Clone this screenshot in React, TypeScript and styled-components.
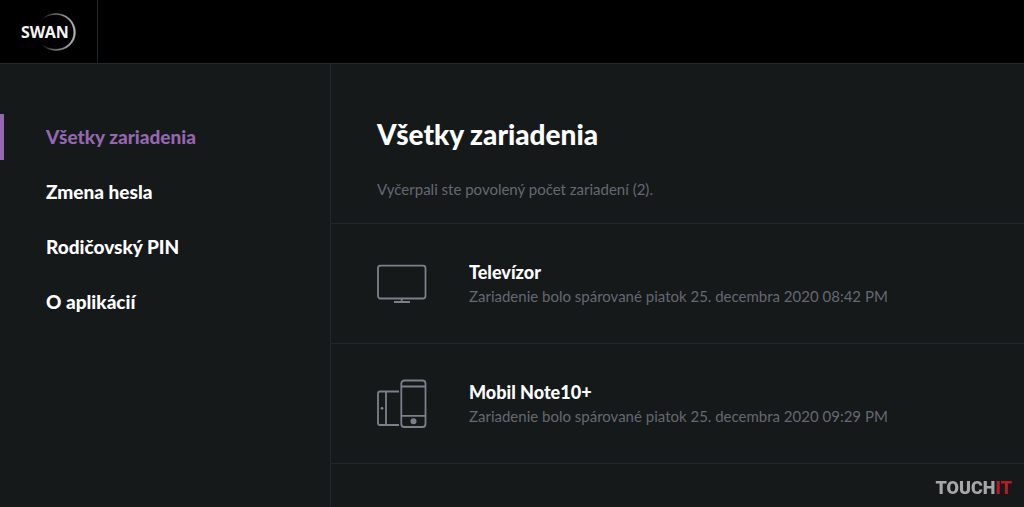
import React from "react";
import styled, { createGlobalStyle } from "styled-components";

const line = "#22262d";
const muted = "#656872";

const GlobalStyle = createGlobalStyle`
  * { box-sizing: border-box; }
  body {
    margin: 0;
    background: #15191a;
    color: #ffffff;
    font-family: Lato, "Liberation Sans", sans-serif;
  }
  h1, h2, p, ul { margin: 0; padding: 0; }
`;

const Page = styled.div`
  min-height: 100vh;
  display: flex;
  flex-direction: column;
`;

const Header = styled.header`
  display: flex;
  height: 64px;
  background: #000000;
  border-bottom: 1px solid ${line};
`;

const LogoLink = styled.a`
  display: flex;
  width: 98px;
  padding: 10px 0 0 20px;
  border-right: 1px solid ${line};
`;

const Body = styled.div`
  flex: 1;
  display: flex;
`;

const Sidebar = styled.nav`
  flex: 0 0 331px;
  padding-top: 50px;
  border-right: 1px solid ${line};
`;

const Menu = styled.ul`
  display: flex;
  flex-direction: column;
  gap: 9px;
  list-style: none;
`;

const MenuLink = styled.a<{ $active?: boolean }>`
  display: block;
  padding-left: 42px;
  border-left: 4px solid ${(p) => (p.$active ? "#9468ae" : "transparent")};
  color: ${(p) => (p.$active ? "#9468ae" : "#ffffff")};
  font-size: 19px;
  font-weight: 900;
  line-height: 46px;
  text-decoration: none;
`;

const Main = styled.main`
  flex: 1;
  min-width: 0;
`;

const Intro = styled.div`
  padding: 52px 46px 22px;
  border-bottom: 1px solid ${line};
`;

const Title = styled.h1`
  font-size: 28px;
  font-weight: 900;
  line-height: 36px;
`;

const Muted = styled.p`
  color: ${muted};
  font-size: 15px;
  line-height: 24px;
`;

const Notice = styled(Muted)`
  margin-top: 25px;
`;

const DeviceList = styled.ul`
  list-style: none;
`;

const Device = styled.li`
  display: flex;
  align-items: center;
  gap: 42px;
  height: 120px;
  padding: 0 46px;
  border-bottom: 1px solid ${line};
`;

const DeviceName = styled.h2`
  font-size: 18px;
  font-weight: 900;
  line-height: 24px;
`;

const Watermark = styled.div`
  position: fixed;
  right: 12px;
  bottom: 7px;
  color: #a6a7a8;
  font-family: Roboto, "Liberation Sans", sans-serif;
  font-size: 18px;
  font-weight: 900;
  line-height: 24px;
`;

const WatermarkAccent = styled.span`
  color: #b01d24;
`;

const SwanLogo = () => (
  <svg width="58" height="44" viewBox="0 0 58 44" role="img" aria-label="SWAN">
    <defs>
      <linearGradient id="ring" x1="0" x2="1" y1="0" y2="0">
        <stop offset="0" stopColor="#fff" stopOpacity="0" />
        <stop offset="0.35" stopColor="#fff" stopOpacity="0.35" />
        <stop offset="1" stopColor="#fff" stopOpacity="0.7" />
      </linearGradient>
    </defs>
    <path
      d="M21 10.500C24.500 6 30 3.500 36.500 3.500C47 3.500 55.500 12 55.500 22.300C55.500 32.500 47 40.500 36.500 40.500C30 40.500 24.500 38 21 33.500C25 37 30 39.200 36 39.200C46 39.200 53.800 32 53.800 22.300C53.800 12.500 46 4.600 36 4.600C30 4.600 25 6.500 21 10.500Z"
      fill="url(#ring)"
      stroke="url(#ring)"
      strokeWidth="0.4"
    />
    <text x="1" y="28" fill="#f4f4f4" fontFamily="Noto Sans, sans-serif" fontSize="16" fontWeight="700">
      SWAN
    </text>
  </svg>
);

const TvIcon = () => (
  <svg width="50" height="50" viewBox="0 0 50 50" fill="none" stroke="#7d7f8a" strokeWidth="1.800" aria-hidden="true">
    <rect x="1" y="6.700" width="47.500" height="32.800" rx="2.500" />
    <path d="M24.700 39.500V43M17 43H33" />
  </svg>
);

const PhonesIcon = () => (
  <svg width="50" height="50" viewBox="0 0 50 50" fill="none" stroke="#7d7f8a" strokeWidth="1.800" aria-hidden="true">
    <path d="M22 12.500H3Q1 12.500 1 14.500V44Q1 46 3 46H22M9 12.500V46" />
    <rect x="24.300" y="1.500" width="24.200" height="46.500" rx="3" />
    <path d="M24.300 7.500H48.500M24.300 36.800H48.500" />
    <circle cx="36.500" cy="42.300" r="3" fill="#7d7f8a" stroke="none" />
    <circle cx="5" cy="29.300" r="1.400" fill="#7d7f8a" stroke="none" />
  </svg>
);

const menu = ["Všetky zariadenia", "Zmena hesla", "Rodičovský PIN", "O aplikácií"];

const devices = [
  { name: "Televízor", paired: "piatok 25. decembra 2020 08:42 PM", Icon: TvIcon },
  { name: "Mobil Note10+", paired: "piatok 25. decembra 2020 09:29 PM", Icon: PhonesIcon },
];

export default function App() {
  return (
    <Page>
      <GlobalStyle />
      <Header>
        <LogoLink href="#">
          <SwanLogo />
        </LogoLink>
      </Header>
      <Body>
        <Sidebar>
          <Menu>
            {menu.map((label, i) => (
              <li key={label}>
                <MenuLink href="#" $active={i === 0} aria-current={i === 0 ? "page" : undefined}>
                  {label}
                </MenuLink>
              </li>
            ))}
          </Menu>
        </Sidebar>
        <Main>
          <Intro>
            <Title>Všetky zariadenia</Title>
            <Notice>Vyčerpali ste povolený počet zariadení (2).</Notice>
          </Intro>
          <DeviceList>
            {devices.map(({ name, paired, Icon }) => (
              <Device key={name}>
                <Icon />
                <div>
                  <DeviceName>{name}</DeviceName>
                  <Muted>Zariadenie bolo spárované {paired}</Muted>
                </div>
              </Device>
            ))}
          </DeviceList>
        </Main>
      </Body>
      <Watermark>
        TOUCH<WatermarkAccent>IT</WatermarkAccent>
      </Watermark>
    </Page>
  );
}
